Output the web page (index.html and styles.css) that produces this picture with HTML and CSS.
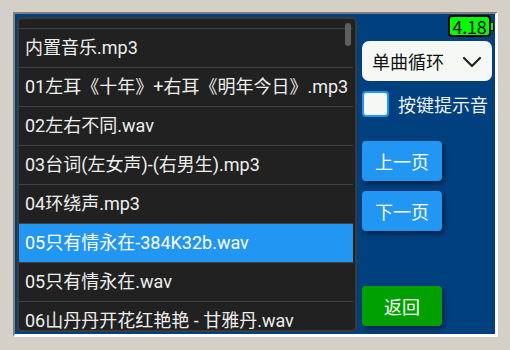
FILE: index.html
```html
<!DOCTYPE html>
<html>
<head>
<meta charset="utf-8">
<link rel="stylesheet" href="styles.css">
</head>
<body>
<div class="frame">
  <div class="screen">
    <div class="list-panel">
      <div class="list">
        <div class="row row-partial"></div>
        <div class="row">内置音乐.mp3</div>
        <div class="row">01左耳《十年》+右耳《明年今日》.mp3</div>
        <div class="row">02左右不同.wav</div>
        <div class="row">03台词(左女声)-(右男生).mp3</div>
        <div class="row">04环绕声.mp3</div>
        <div class="row selected">05只有情永在-384K32b.wav</div>
        <div class="row">05只有情永在.wav</div>
        <div class="row row-last">06山丹丹开花红艳艳 - 甘雅丹.wav</div>
      </div>
      <div class="scrollbar"></div>
    </div>
    <div class="side">
      <div class="battery"><span class="battery-body">4.18</span><span class="battery-nub"></span></div>
      <div class="dropdown">
        <span>单曲循环</span>
        <svg class="chevron" width="20" height="12" viewBox="0 0 20 12"><path d="M2 2 L10 10 L18 2" fill="none" stroke="#222" stroke-width="2.2" stroke-linecap="round" stroke-linejoin="round"/></svg>
      </div>
      <label class="check">
        <span class="box"></span>
        <span class="check-label">按键提示音</span>
      </label>
      <div class="btn btn-blue btn-first">上一页</div>
      <div class="btn btn-blue btn-next">下一页</div>
      <div class="btn btn-green">返回</div>
    </div>
  </div>
</div>
</body>
</html>
```
FILE: styles.css
```css
* { box-sizing: border-box; }
html, body {
  margin: 0;
  padding: 0;
  background: #d4d0c8;
  width: 510px;
  height: 350px;
  overflow: hidden;
}
body {
  font-family: "Roboto", "Noto Sans CJK SC", sans-serif;
}
.frame {
  margin: 12px 0 0 13px;
  width: 485px;
  height: 325px;
  border-top: 2px solid #808080;
  border-left: 2px solid #808080;
  border-right: 3px solid #ffffff;
  border-bottom: 3px solid #ffffff;
}
.screen {
  width: 480px;
  height: 320px;
  background: #00407f;
  display: flex;
  padding: 3px 0 0 2px;
}
.list-panel {
  position: relative;
  width: 340px;
  height: 315px;
  border: 2px solid #3a3a3a;
  border-radius: 5px;
  background: #212121;
  padding-right: 2px;
  overflow: hidden;
}
.list {
  display: flex;
  flex-direction: column;
}
.row {
  flex: none;
  height: 39px;
  border-bottom: 1px solid #424242;
  color: #eeeeee;
  font-size: 18px;
  line-height: 38px;
  padding-left: 6px;
  white-space: nowrap;
  overflow: hidden;
}
.row-partial { height: 10px; }
.row-last {
  height: 29px;
  border-bottom: none;
  line-height: 20px;
  padding-top: 9px;
}
.row.selected { background: #2196f3; color: #ffffff; }
.scrollbar {
  position: absolute;
  left: 326px;
  top: 4px;
  width: 6px;
  height: 23px;
  border-radius: 3px;
  background: #5e5e5e;
}
.side {
  margin-left: 5px;
  width: 130px;
  display: flex;
  flex-direction: column;
  padding-bottom: 8px;
}
.battery {
  align-self: flex-end;
  display: flex;
  align-items: center;
  margin-top: -2px;
  margin-right: -2px;
}
.battery-body {
  flex: none;
  width: 43px;
  height: 22px;
  background: #00ff00;
  border: 2px solid #000;
  border-radius: 4px;
  color: #000;
  font-family: "Noto Sans CJK SC", sans-serif;
  font-size: 18px;
  line-height: 18px;
  text-align: center;
  letter-spacing: -0.3px;
}
.battery-nub {
  flex: none;
  width: 3px;
  height: 9px;
  background: #00ff00;
  border: 1px solid #000;
  border-left: none;
}
.dropdown {
  margin-top: 4px;
  height: 40px;
  background: #f5f8f5;
  border-radius: 7px;
  display: flex;
  align-items: center;
  justify-content: space-between;
  padding: 0 10px 0 10px;
  color: #111;
  font-size: 18px;
}
.chevron { margin-top: 1px; }
.check {
  margin-top: 10px;
  display: flex;
  align-items: center;
  gap: 9px;
}
.box {
  width: 27px;
  height: 26px;
  background: #f5f8f5;
  border: 2px solid #2196f3;
  border-radius: 4px;
}
.check-label {
  color: #f0f0f0;
  font-size: 18px;
}
.btn {
  width: 80px;
  height: 40px;
  border-radius: 4px;
  color: #ffffff;
  font-size: 18px;
  display: flex;
  align-items: center;
  justify-content: center;
  box-shadow: 2px 3px 5px rgba(0, 0, 0, 0.45);
}
.btn-blue { background: #2196f3; }
.btn-first { margin-top: 24px; }
.btn-next { margin-top: 10px; }
.btn-green { background: #00a000; margin-top: auto; }
```
